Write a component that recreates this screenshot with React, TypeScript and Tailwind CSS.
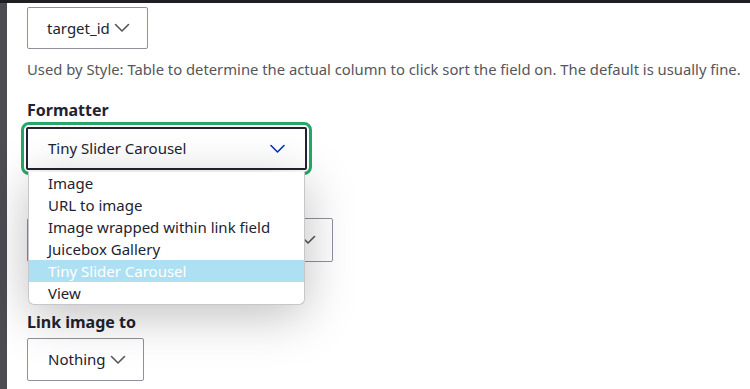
import React from "react";

const Chevron = ({ className }: { className?: string }) => (
  <svg className={className} viewBox="0 0 16 10" fill="none" stroke="currentColor" strokeWidth="1.6" strokeLinecap="round" strokeLinejoin="round">
    <path d="M1.5 1.5 L8 8 L14.5 1.5" />
  </svg>
);

const items = ["Image", "URL to image", "Image wrapped within link field", "Juicebox Gallery", "Tiny Slider Carousel", "View"];

export default function App() {
  return (
    <div className="w-[750px] h-[389px] overflow-hidden bg-white flex flex-col text-[#222330]" style={{ fontFamily: '"Noto Sans", "Open Sans", sans-serif' }}>
      <div className="h-[3px] bg-[#1f1f23] shrink-0" />
      <div className="flex flex-1 min-h-0">
        <div className="w-[7px] shrink-0 bg-[#4c4c52]" />
        <div className="flex-1 pl-[20px] pt-[4px] flex flex-col items-start">
          <button className="h-[42px] w-[121px] border border-[#8e929c] rounded-[2px] flex items-center pl-[19px] gap-[4px] text-[15px] text-[#222330]">
            <span>target_id</span>
            <Chevron className="w-[16px] h-[10px] text-[#55565b]" />
          </button>
          <p className="mt-[11px] text-[14.8px] leading-[18px] text-[#55565b] whitespace-nowrap">
            Used by Style: Table to determine the actual column to click sort the field on. The default is usually fine.
          </p>
          <div className="mt-[22px] font-bold text-[16px] leading-[20px]">Formatter</div>
          <div className="relative z-10 mt-[2px] -ml-[6px] p-[2px] border-[3px] border-[#26a769] rounded-[8px]">
            <div className="w-[281px] h-[43px] border-2 border-[#222330] rounded-[2px] flex items-center justify-between pl-[20px] pr-[19px] text-[15px]">
              <span>Tiny Slider Carousel</span>
              <Chevron className="w-[17px] h-[10px] text-[#0036b1]" />
            </div>
            <div className="absolute left-[4px] top-[47px] w-[277px] bg-white border border-[#c6c6cc] border-t-0 rounded-b-[6px] shadow-[0_10px_50px_rgba(0,0,0,0.26)] overflow-hidden">
              {items.map((it) => (
                <div
                  key={it}
                  className={`h-[22px] flex items-center pl-[19px] text-[15px] ${it === "Tiny Slider Carousel" ? "bg-[#aee0f4] text-white" : "text-[#222330]"}`}
                >
                  {it}
                </div>
              ))}
            </div>
          </div>
          <div className="mt-[43px] h-[44px] w-[306px] border border-[#8e929c] rounded-[2px] flex items-center justify-end pr-[16px]">
            <Chevron className="w-[16px] h-[10px] text-[#55565b]" />
          </div>
          <div className="mt-[14px] h-[16px]" />
          <div className="mt-[20px] font-bold text-[16px] leading-[20px]">Link image to</div>
          <button className="mt-[6px] h-[43px] w-[117px] border border-[#8e929c] rounded-[2px] flex items-center pl-[20px] gap-[4px] text-[15px] text-[#222330]">
            <span>Nothing</span>
            <Chevron className="w-[16px] h-[10px] text-[#55565b]" />
          </button>
        </div>
      </div>
    </div>
  );
}
